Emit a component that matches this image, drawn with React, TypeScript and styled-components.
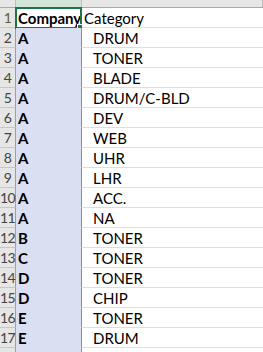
import styled, { createGlobalStyle } from "styled-components";

const GlobalStyle = createGlobalStyle`
  html, body {
    margin: 0;
    padding: 0;
    background: #ffffff;
    overflow: hidden;
  }
  body {
    font-family: "Lato", "Liberation Sans", sans-serif;
  }
`;

type Row = { company: string; category: string };

const rows: Row[] = [
  { company: "A", category: "DRUM" },
  { company: "A", category: "TONER" },
  { company: "A", category: "BLADE" },
  { company: "A", category: "DRUM/C-BLD" },
  { company: "A", category: "DEV" },
  { company: "A", category: "WEB" },
  { company: "A", category: "UHR" },
  { company: "A", category: "LHR" },
  { company: "A", category: "ACC." },
  { company: "A", category: "NA" },
  { company: "B", category: "TONER" },
  { company: "C", category: "TONER" },
  { company: "D", category: "TONER" },
  { company: "D", category: "CHIP" },
  { company: "E", category: "TONER" },
  { company: "E", category: "DRUM" },
];

export default function App() {
  return (
    <>
      <GlobalStyle />
      <Sheet>
        {/* column header strip, scrolled mostly out of view */}
        <Corner />
        <ColHead $active />
        <ColHead />

        <RowHead $active>1</RowHead>
        <Cell $bold $active>
          Company
          <Cursor>
            <Handle />
          </Cursor>
        </Cell>
        <Cell>Category</Cell>

        {rows.map((r, i) => (
          <RowLine key={i} n={i + 2} row={r} />
        ))}

        <RowHead />
        <Cell $shaded />
        <Cell />
      </Sheet>
    </>
  );
}

const RowLine = ({ n, row }: { n: number; row: Row }) => (
  <>
    <RowHead>{n}</RowHead>
    <Cell $bold $shaded>
      {row.company}
    </Cell>
    <Cell $indent>{row.category}</Cell>
  </>
);

const Sheet = styled.div`
  display: grid;
  grid-template-columns: 16px 66px 1fr;
  grid-template-rows: 8px;
  grid-auto-rows: 20px;
  width: 263px;
  height: 352px;
  overflow: hidden;
  font-size: 15px;
  color: #000;
`;

const Corner = styled.div`
  background: #e6e6e6;
  border-right: 1px solid #bdbdbd;
  border-bottom: 1px solid #a8a8a8;
  box-sizing: border-box;
`;

const ColHead = styled.div<{ $active?: boolean }>`
  background: ${(p) => (p.$active ? "#d3e5d8" : "#e6e6e6")};
  border-right: 1px solid #bdbdbd;
  border-bottom: 1px solid ${(p) => (p.$active ? "#217346" : "#a8a8a8")};
  box-sizing: border-box;
`;

const RowHead = styled.div<{ $active?: boolean }>`
  background: #e6e6e6;
  border-right: 1px solid #9e9e9e;
  border-bottom: 1px solid #c6c6c6;
  box-sizing: border-box;
  color: ${(p) => (p.$active ? "#6b5a2a" : "#444")};
  font-size: 14px;
  display: flex;
  align-items: center;
  justify-content: center;
  letter-spacing: -0.5px;
`;

const Cell = styled.div<{
  $bold?: boolean;
  $shaded?: boolean;
  $indent?: boolean;
  $active?: boolean;
}>`
  position: relative;
  box-sizing: border-box;
  background: ${(p) => (p.$shaded ? "#dae0f2" : "#ffffff")};
  border-bottom: 1px solid ${(p) => (p.$shaded ? "#dae0f2" : "#d9ddec")};
  ${(p) => (p.$shaded || p.$active ? "border-right: 1px solid #6f8fcc;" : "")}
  font-weight: ${(p) => (p.$bold ? 700 : 400)};
  padding-left: ${(p) => (p.$indent ? "11px" : "2px")};
  display: flex;
  align-items: center;
  white-space: nowrap;
`;

const Cursor = styled.div`
  position: absolute;
  left: -1px;
  top: -1px;
  right: -1px;
  bottom: -2px;
  border: 2px solid #217346;
  pointer-events: none;
`;

const Handle = styled.div`
  position: absolute;
  right: -4px;
  bottom: -4px;
  width: 5px;
  height: 5px;
  background: #217346;
  border: 1px solid #ffffff;
`;
